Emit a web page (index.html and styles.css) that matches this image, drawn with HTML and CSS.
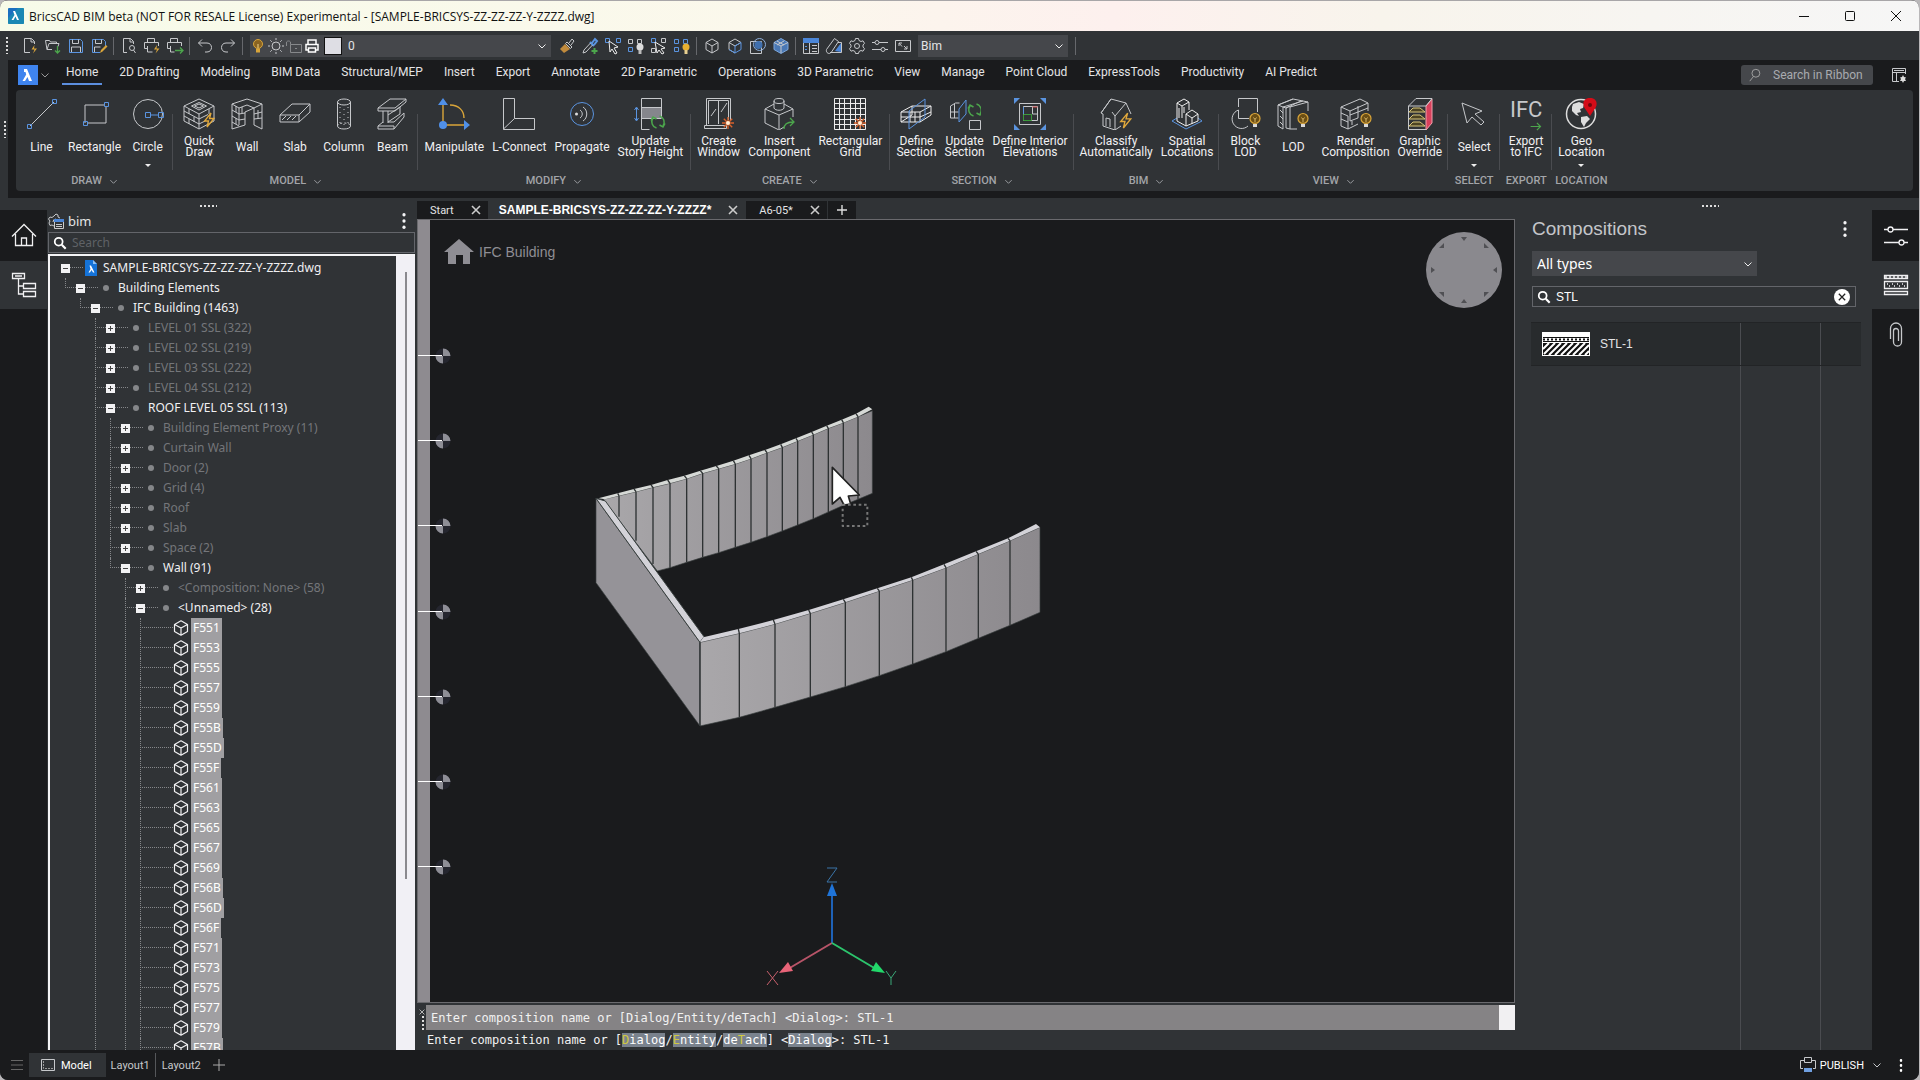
FILE: index.html
```html
<!DOCTYPE html>
<html lang="en">
<head>
<meta charset="utf-8">
<title>BricsCAD BIM</title>
<link rel="stylesheet" href="styles.css">
</head>
<body>
<svg class="defs" aria-hidden="true">
  <symbol id="chev" viewBox="0 0 10 10"><path d="M1.500 3.500l3.500 3.500 3.500-3.500" fill="none" stroke="currentColor"/></symbol>
  <symbol id="bolt" viewBox="0 0 12 16"><path d="M8 1L1.500 9h4L4 15l7-8.500H6.500z" fill="none" stroke="#e0a83c" stroke-width="1.300"/></symbol>
  <symbol id="bulb" viewBox="0 0 12 16"><circle cx="6" cy="6" r="5" fill="#6b4e14" stroke="#d9a53a" stroke-width="1.200"/><path d="M4.500 5l1.500 2 1.500-2M6 7v3" stroke="#f0cf7c" fill="none" stroke-width=".8"/><path d="M4 11.500h4v3H4z" fill="#d8d8d8"/></symbol>
  <symbol id="spark" viewBox="0 0 12 12"><path d="M6 0v12M0 6h12M1.800 1.800l8.400 8.400M10.200 1.800l-8.400 8.400" stroke="#d8622c" stroke-width="1.400"/><circle cx="6" cy="6" r="2" fill="#fff0d8"/></symbol>
  <symbol id="sync" viewBox="0 0 16 16"><path d="M6.500 14A6.500 6.500 0 0 1 3 4M1 6.500L3 3l3.500 2M9.500 2A6.500 6.500 0 0 1 13 12M15 9.500L13 13l-3.500-2" fill="none" stroke="#4ca64c" stroke-width="1.500"/></symbol>
  <symbol id="mag" viewBox="0 0 16 16"><circle cx="6.500" cy="6.500" r="4.500" fill="none" stroke="currentColor" stroke-width="2"/><path d="M10 10l4.500 4.500" stroke="currentColor" stroke-width="2.500"/></symbol>
  <symbol id="cube" viewBox="0 0 16 16"><path d="M8 .8l6.500 3.700v7L8 15.200l-6.500-3.700v-7zM1.500 4.500L8 8l6.500-3.500M8 8v7" fill="none" stroke="currentColor" stroke-width="1.200" stroke-linejoin="round"/></symbol>
  <symbol id="x" viewBox="0 0 10 10"><path d="M1 1l8 8M9 1L1 9" stroke="currentColor" stroke-width="1.600"/></symbol>
  <symbol id="dots" viewBox="0 0 4 18"><circle cx="2" cy="2" r="2" fill="currentColor"/><circle cx="2" cy="9" r="2" fill="currentColor"/><circle cx="2" cy="16" r="2" fill="currentColor"/></symbol>
</svg>

<div class="window">
  <header class="titlebar">
    <svg class="app-logo" viewBox="0 0 16 16"><rect width="16" height="16" rx="1" fill="#1b6fc0"/><path d="M0 10L10 0h6v16H0z" fill="#1aa0a8" opacity=".5"/><path d="M5 3h2l4 9H9L7.500 8.500 5.500 12H3.500l3-5z" fill="#fff"/></svg>
    <h1>BricsCAD BIM beta (NOT FOR RESALE License) Experimental - [SAMPLE-BRICSYS-ZZ-ZZ-ZZ-Y-ZZZZ.dwg]</h1>
    <div class="win-btns">
      <button aria-label="Minimize"><svg viewBox="0 0 12 12"><path d="M1 6.500h10"/></svg></button>
      <button aria-label="Maximize"><svg viewBox="0 0 12 12"><rect x="1.500" y="1.500" width="9" height="9" rx="1"/></svg></button>
      <button aria-label="Close"><svg viewBox="0 0 12 12"><path d="M1 1l10 10M11 1L1 11"/></svg></button>
    </div>
  </header>

  <div class="toolbar">
    <span class="grip-v"></span>
    <button aria-label="New"><svg viewBox="0 0 18 18"><path class="w" d="M9 15.500H3.500v-14h7l3 3V7M10 1.500V5h3.500"/><path class="y" d="M13.500 8l-3 4.500h3l-1.500 4 4-5h-3z"/></svg></button>
    <button aria-label="Open"><svg viewBox="0 0 18 18"><path class="w" d="M8 12.500H3L1.500 3.500h4l1 1.500h6v2M3 12.500l2-6h10l-1 3"/><path class="g" d="M13.500 9v7M11 13.500l2.500 2.500 2.500-2.500"/></svg></button>
    <button aria-label="Save"><svg viewBox="0 0 18 18"><path class="b" d="M2.500 2.500h11l2 2v11h-13z"/><path class="w" d="M5.500 2.500v4h6v-4M4.500 15v-5h9v5"/></svg></button>
    <button aria-label="Save as"><svg viewBox="0 0 18 18"><path class="b" d="M10 15.500H2.500v-13h11l2 2V9"/><path class="w" d="M5.500 2.500v4h6v-4M4.500 15v-5h6"/><path class="y" d="M10 16l1-3 5-5 1.500 1.500-5 5z"/></svg></button>
    <span class="sep"></span>
    <button aria-label="Print preview"><svg viewBox="0 0 18 18"><path class="w" d="M7 15.500H3.500v-14h7l3 3V7M10 1.500V5h3.500"/><circle class="w" cx="12" cy="11" r="2.500"/><path class="w" d="M13.500 13l2 3"/></svg></button>
    <button aria-label="Print"><svg viewBox="0 0 18 18"><path class="w" d="M4.500 5.500v-4h7v4M4 11.500H1.500v-6h14V9M4.500 9v6h5"/><path class="y" d="M14 8l-3 4.500h3l-1.500 4 4-5h-3z"/></svg></button>
    <button aria-label="Publish"><svg viewBox="0 0 18 18"><path class="w" d="M4.500 5.500v-4h7v4M4 11.500H1.500v-6h14V9M4.500 9v6h4"/><path class="g" d="M9 13.500h8M14 10.500l3 3-3 3"/></svg></button>
    <span class="sep"></span>
    <button aria-label="Undo"><svg viewBox="0 0 18 18"><path class="w" d="M6 2.500L2.500 6 6 9.500M2.500 6H11c6 0 6 9 0 9H9"/></svg></button>
    <button aria-label="Redo"><svg viewBox="0 0 18 18"><path class="w" d="M12 2.500L15.500 6 12 9.500M15.500 6H7C1 6 1 15 7 15h2"/></svg></button>
    <span class="sep"></span>
    <div class="combo layer">
      <svg viewBox="0 0 16 16"><circle cx="8" cy="6" r="4.500" fill="#8a6422" stroke="#d9a53a"/><path d="M6 10.500h4v4H6z" fill="#d9a53a"/><path d="M8 6v4" stroke="#f3d68a"/></svg>
      <svg viewBox="0 0 16 16"><circle cx="8" cy="8" r="4" class="w"/><path class="w" d="M8 0v2M8 14v2M0 8h2M14 8h2M2.300 2.300l1.500 1.500M12.200 12.200l1.500 1.500M13.700 2.300l-1.500 1.500M3.800 12.200l-1.500 1.500"/></svg>
      <svg viewBox="0 0 16 16" class="dim"><path class="w" d="M4.500 14.500h11v-8h-11zM4.500 6.500V4a2.500 2.500 0 0 0-4 0v4M9 10.500h2"/></svg>
      <svg viewBox="0 0 16 16"><path d="M4 6V2h8v4M4 12H2V6.500h12V12h-2M4.500 10h7v4h-7z" fill="none" stroke="#fff" stroke-width="1.500"/></svg>
      <span class="swatch"></span>
      <select aria-label="Layer"><option>0</option></select>
      <svg class="chev"><use href="#chev"/></svg>
    </div>
    <button aria-label="Match properties"><svg viewBox="0 0 18 18"><path class="w" d="M11 6l3-4 2 2-3 4M9 5l5 5-1.500 1.500-5-5z"/><path d="M7 7l5 5-6 4-4-4z" fill="#c08a3c"/></svg></button>
    <button aria-label="Pick"><svg viewBox="0 0 18 18"><path class="b" d="M9 5l4 4M11 6l3-4 2 2-3 4" stroke-width="2"/><path class="w" d="M9.500 6L3 13l-1 3 3-1 6.500-7"/><path class="g2" d="M13.500 11v6M10.500 14h6"/></svg></button>
    <button aria-label="Select similar"><svg viewBox="0 0 18 18"><path class="b" d="M1.500 1.500h4v4h-4zM12.500 1.500h4v4h-4z"/><path class="w2" d="M5 4l9 6-4 1 3 5-2 1-3-5-2 3z"/></svg></button>
    <button aria-label="Isolate"><svg viewBox="0 0 18 18"><path class="w" d="M1.500 2.500h4v4h-4zM10.500 2.500h4v4h-4z"/><path class="b" d="M1.500 10.500h4v4h-4z"/><circle cx="13" cy="10" r="3.500" fill="#ddd"/><path d="M11.500 13h3v4h-3z" fill="#bbb"/></svg></button>
    <button aria-label="Hide"><svg viewBox="0 0 18 18"><path class="b" d="M1.500 1.500h4v4h-4z"/><path class="w" d="M11.500 1.500h4v4h-4zM1.500 11.500h4v4h-4z"/><path class="w2" d="M5 5l10 6-4 1 3 4-2 1-3-4-2 3z"/></svg></button>
    <button aria-label="Show"><svg viewBox="0 0 18 18"><path class="b" d="M1.500 2.500h4v4h-4zM10.500 2.500h4v4h-4zM1.500 10.500h4v4h-4z"/><circle cx="13" cy="10" r="3.500" fill="#e8b030"/><path d="M11.500 13h3v4h-3z" fill="#e8d090"/></svg></button>
    <span class="sep"></span>
    <button aria-label="Box"><svg viewBox="0 0 18 18"><path class="w" d="M9 2l6 3.500v7L9 16l-6-3.500v-7zM3 5.500L9 9l6-3.500M9 9v7"/></svg></button>
    <button aria-label="Box edges"><svg viewBox="0 0 18 18"><path class="w" d="M3 5.500L9 2l6 3.500L9 9zM3 5.500v7L9 16"/><path class="b" d="M15 5.500v7L9 16V9l6-3.500M3 12.500L9 16"/></svg></button>
    <button aria-label="Boolean"><svg viewBox="0 0 18 18"><path class="w" d="M1.500 4.500h11v12h-11z"/><circle cx="10.500" cy="7.500" r="6" fill="none" stroke="#8fb0dc"/><circle cx="9.500" cy="8" r="4" fill="#3f6fae"/></svg></button>
    <button aria-label="Shaded box"><svg viewBox="0 0 18 18"><path d="M9 1.500l7 4v7l-7 4-7-4v-7z" fill="#4a78b4" stroke="#7ba6dc"/><path class="w" d="M2 5.500L9 9l7-3.500M9 9v7M5 4l7 4M12 4L5 8"/></svg></button>
    <span class="sep"></span>
    <button aria-label="Properties"><svg viewBox="0 0 18 18"><path class="w" d="M1.500 1.500h15v15h-15z"/><path d="M1 1h16v5H1z" fill="#4b86d8"/><path class="w" d="M7.500 6v10M10 8.500h5M10 11.500h5M10 14.500h5"/><path class="b" d="M3 9.500h2M3 12.500h2"/></svg></button>
    <button aria-label="Materials"><svg viewBox="0 0 18 18"><path class="w" d="M1.500 12.500l8-11 4 3-7 10.500c-2 3-6 1-5-2.500z"/><path d="M10 14l6-8v9z" fill="#4b86d8"/><path class="w" d="M13 5.500h3.500v10H5"/></svg></button>
    <button aria-label="Settings"><svg viewBox="0 0 18 18"><circle class="w" cx="9" cy="9" r="2.500"/><path class="w" d="M7.500 1.500h3l.5 2 2 1 2-.7 1.500 2.500-1.500 1.700v2l1.500 1.700-1.500 2.500-2-.7-2 1-.5 2h-3l-.5-2-2-1-2 .7L1.500 11.700 3 10V8L1.500 6.300 3 3.800l2 .7 2-1z"/></svg></button>
    <button aria-label="Options"><svg viewBox="0 0 18 18"><circle class="w" cx="6" cy="5.500" r="2"/><circle class="w" cx="12" cy="12.500" r="2"/><path class="w" d="M1 5.500h3M8 5.500h9M1 12.500h9M14 12.500h3"/></svg></button>
    <button aria-label="Full screen"><svg viewBox="0 0 18 18"><path class="w" d="M1.500 3.500h15v11h-15zM8 9.500L5 6M5 9V6h3M10 9l3 3M13 9v3h-3"/></svg></button>
    <div class="combo workspace">
      <select aria-label="Workspace"><option>Bim</option></select>
      <svg class="chev"><use href="#chev"/></svg>
    </div>
    <span class="sep"></span>
  </div>

  <section class="ribbon-wrap">
    <span class="grip-v side"></span>
    <div class="ribbon">
      <div class="tabs">
        <button class="logo-btn" aria-label="Application menu"><svg viewBox="0 0 20 20"><path d="M6 4h3l5 12h-3L9.500 12 7 16H4.500l3.700-6.500L7.500 7H6z" fill="#fff"/></svg></button>
        <svg class="chev"><use href="#chev"/></svg>
        <nav>
          <a href="#" class="on">Home</a><a href="#">2D Drafting</a><a href="#">Modeling</a><a href="#">BIM Data</a><a href="#">Structural/MEP</a><a href="#">Insert</a><a href="#">Export</a><a href="#">Annotate</a><a href="#">2D Parametric</a><a href="#">Operations</a><a href="#">3D Parametric</a><a href="#">View</a><a href="#">Manage</a><a href="#">Point Cloud</a><a href="#">ExpressTools</a><a href="#">Productivity</a><a href="#">AI Predict</a>
        </nav>
        <label class="rsearch"><svg viewBox="0 0 16 16"><circle cx="9" cy="6" r="4.500" fill="none" stroke="#aaa"/><path d="M6 10l-4 5" stroke="#aaa"/></svg><input placeholder="Search in Ribbon" aria-label="Search in Ribbon"></label>
        <button class="rcfg" aria-label="Ribbon settings"><svg viewBox="0 0 16 16"><path class="w" d="M8 14.500H1.500v-13h13V7M1.500 5.500h13M5.500 5.500v9M3 3.500h10"/><path d="M12 8l1 2 2 .5-1 1.500 1 2h-2l-1 2-1-2H9l1-2-1-1.500 2-.5z" fill="#ddd"/></svg></button>
      </div>
      <div class="panel">
        <div class="group draw">
          <div class="btns">
            <button><svg viewBox="0 0 32 32"><path class="w" d="M4 28L28 4"/><path class="b" d="M1.500 26.500h4v4h-4zM26.500 1.500h4v4h-4z"/></svg><span>Line</span></button>
            <button><svg viewBox="0 0 32 32"><path class="w" d="M6 25V7h19M27 9v16H8"/><path class="b" d="M4.500 23.500h4v4h-4zM25.500 4.500h4v4h-4z"/></svg><span>Rectangle</span></button>
            <button><svg viewBox="0 0 32 32"><circle class="w" cx="16" cy="16" r="14.500"/><path class="b" d="M13.500 14.500h5v5h-5zM26.500 14.500h5v5h-5zM18.500 17h8"/></svg><span>Circle</span><i class="tri"></i></button>
          </div>
          <h2>DRAW <svg class="chev"><use href="#chev"/></svg></h2>
        </div>
        <div class="group">
          <div class="btns">
            <button><svg viewBox="0 0 32 32"><path class="w" d="M16 1l15 7v15L16 31 1 23V8zM1 8l15 8 15-8M16 16v15M8.500 8L16 4.500 23.500 8 16 12zM11.500 8L16 6l4.500 2L16 10zM1 13l15 8 9-4.500M1 18l15 8 6-3M6 11v5M11 19v5M6 21v5M26 11v5"/><use href="#bolt" x="20" y="14" width="12" height="16"/></svg><span>Quick<br>Draw</span></button>
            <button><svg viewBox="0 0 32 32"><path class="w" d="M1 6l15-5 15 5v25l-8-4V10L14 14v13L1 31zM1 6l7 4 8-3 7 3 8-4M8 10v17M1 12l7 4 6-1M1 18l7 4 6-1M1 24l7 4M5 8v6M5 20v6M11 9v6M23 16l8-2M23 21l8-1M27 12v9"/></svg><span>Wall</span></button>
            <button><svg viewBox="0 0 32 32"><path class="w" d="M1 17L13 6h18v8L20 24H1zM1 17h19v7M20 17L31 6M3 22l4-4M8 22l4-4M13 22l4-4"/></svg><span>Slab</span></button>
            <button><svg viewBox="0 0 32 32"><ellipse class="w" cx="16" cy="4" rx="6.500" ry="3"/><path class="w" d="M9.500 4v24c0 4 13 4 13 0V4"/><path class="w" stroke-dasharray="1 4" d="M12 9v20M16 11v20M20 9v20"/><path class="w" stroke-dasharray="2 2" d="M9.500 28c0-4 13-4 13 0"/></svg><span>Column</span></button>
            <button><svg viewBox="0 0 32 32"><path class="w" d="M2 10L14 1h16v3L19 13H2zM2 10h17L30 1M7 13v12M12 13v12M2 28h16v3H2zM2 28l5-4M12 24h6l10-9v4L18 31M12 17l12-8v7l-12 8"/></svg><span>Beam</span></button>
          </div>
          <h2>MODEL <svg class="chev"><use href="#chev"/></svg></h2>
        </div>
        <div class="group wide">
          <div class="btns">
            <button><svg viewBox="0 0 32 32"><path d="M5 27V7M5 27h22M12 7c9 0 14 6 14 13" fill="none" stroke="#d9a53a" stroke-width="1.400"/><path d="M5 0l5 7H0zM32 27l-6 5V22z" fill="#5090e8"/><circle cx="5" cy="27" r="4" fill="#5090e8"/></svg><span>Manipulate</span></button>
            <button><svg viewBox="0 0 32 32"><path class="w" d="M.5 31.500V.5h11v20h20v11zM.5 31l11-10.500"/></svg><span>L-Connect</span></button>
            <button><svg viewBox="0 0 32 32"><circle class="b" cx="16" cy="16" r="11.500"/><circle cx="10.500" cy="16" r="1.500" fill="#ddd"/><path class="w" d="M14 12c3 2 3 6 0 8M17 9c5 3 5 11 0 14"/></svg><span>Propagate</span></button>
            <button><svg viewBox="0 0 32 32"><path d="M7 9h20v11H7z" fill="#85868c"/><path class="w" d="M7.500 31.500v-31h20V20M7.500 9.500h20M7.500 20.500h20M7.500 31.500h8"/><path class="b" d="M2.500 10v12M.5 12l2-3 2 3M.5 20l2 3 2-3"/><use href="#sync" x="16" y="16" width="16" height="16"/></svg><span>Update<br>Story Height</span></button>
          </div>
          <h2>MODIFY <svg class="chev"><use href="#chev"/></svg></h2>
        </div>
        <div class="group wide">
          <div class="btns">
            <button><svg viewBox="0 0 32 32"><path class="w" d="M3.500 27V.5h24V22M5.500 26V2.500h20V22M15.500 2.500V26M1.500 27.500h22v3h-22zM8 18l5-7M18 14l6-9"/><use href="#spark" x="19" y="19" width="12" height="12"/></svg><span>Create<br>Window</span></button>
            <button><svg viewBox="0 0 32 32"><path class="w" d="M11 6L2 11v14l14 7 5-3M21 6l9 5v8M2 11l14 6 14-6M16 17v14M11 3v7c1 3 9 3 10 0V3"/><ellipse class="w" cx="16" cy="3" rx="5" ry="2.500"/><path class="g" d="M21 31c0-5 3-7 9-7M27 20l4 4-4 4"/></svg><span>Insert<br>Component</span></button>
            <button><svg viewBox="0 0 32 32"><path d="M.5.500h31v31H.5zM5.500 0v32M10.500 0v32M16.500 0v32M21.500 0v32M26.500 0v32M0 5.500h32M0 10.500h32M0 16.500h32M0 21.500h32M0 26.500h32" fill="none" stroke="#eee"/><use href="#spark" x="20" y="19" width="12" height="12"/></svg><span>Rectangular<br>Grid</span></button>
          </div>
          <h2>CREATE <svg class="chev"><use href="#chev"/></svg></h2>
        </div>
        <div class="group">
          <div class="btns">
            <button><svg viewBox="0 0 32 32"><path class="w2" fill="none" d="M1 14l11-6h19v9L20 24H1zM1 14h19v10M20 14L31 8M1 19h19l11-5M10 14v10M15 14v10M12 8v9l-11 7"/><path class="b" d="M9 13L25 1v18L9 31z"/></svg><span>Define<br>Section</span></button>
            <button><svg viewBox="0 0 32 32"><path class="w" d="M1.500 8v12h8M1.500 8l5-3h4M1.500 14h8M5.500 6v14M20.500 22.500h11v9h-11z"/><path class="b" d="M10 11l7-9v14l-7 8z"/><use href="#sync" x="18" y="4" width="16" height="16"/></svg><span>Update<br>Section</span></button>
            <button><svg viewBox="0 0 32 32"><path class="w" d="M5.500 5.500h21v21h-21zM9.500 8.500h14v14h-14zM18.500 9v7h5"/><path d="M9.500 16.500h8v6h-8z" fill="none" stroke="#3a9a3a"/><path d="M18.500 9h5" stroke="#c44"/><path class="b" d="M9.500 9v7"/><path d="M0 0h6L0 6zM32 0h-6l6 6zM0 32h6l-6-6zM32 32h-6l6-6z" fill="#5a94e0"/></svg><span>Define Interior<br>Elevations</span></button>
          </div>
          <h2>SECTION <svg class="chev"><use href="#chev"/></svg></h2>
        </div>
        <div class="group">
          <div class="btns">
            <button><svg viewBox="0 0 32 32"><path class="w" d="M1 15L11 1l15 4 5 11M1 15l2 1v12l12 4V18L26 5M15 18l-3-4M15 32l6-4M6 28v-8l4 1v8M11 1L1 15"/><use href="#bolt" x="19" y="14" width="13" height="17"/></svg><span>Classify<br>Automatically</span></button>
            <button><svg viewBox="0 0 32 32"><path class="b" d="M6 20l-5 3 14 8 16-8-4-3"/><path class="w2" fill="none" d="M6 5l7-4 5 3v8M6 5l5 3 7-4M6 5v18l9 5V16l6-4 6 4v7l-12 5M11 8v12M8 10v10M15 16l6 4 6-4M21 20v6M13 9v6"/></svg><span>Spatial<br>Locations</span></button>
          </div>
          <h2>BIM <svg class="chev"><use href="#chev"/></svg></h2>
        </div>
        <div class="group">
          <div class="btns">
            <button><svg viewBox="0 0 32 32"><path class="w" d="M9.500 9V.5h19V14M9.500 12A9.500 9.500 0 1 0 19 28M9.500 12v8.500H20"/><use href="#bulb" x="20" y="14" width="12" height="17"/></svg><span>Block<br>LOD</span></button>
            <button><svg viewBox="0 0 32 32"><path class="w" d="M1 7l15-6 15 3v9M1 7v21l5 3V9L1 7l15-6M6 9l20-6M9 10v20l4 1V8l-4 2M13 9l18-5M20 31h-7M3 12l3 3M3 18l3 3M3 24l3 3M6 9l3 1 15-7"/><use href="#bulb" x="20" y="14" width="12" height="17"/></svg><span>LOD</span></button>
            <button><svg viewBox="0 0 32 32"><path class="w" d="M1 9L20 1l8 4v8M1 9l9 4 18-8M1 9v19l7 3 10-5M10 13v10l8-3v-6l-8 3M1 15l7 3M8 18v13M1 21l7 3M18 8v6l10-4M12 23v4"/><use href="#bulb" x="20" y="14" width="12" height="17"/></svg><span>Render<br>Composition</span></button>
            <button><svg viewBox="0 0 32 32"><path d="M22 8l6-7v24l-6 7z" fill="#d8405c" stroke="#f2a0ac"/><path class="w" d="M4.500 8L12 .500h16L22 8zM4.500 8v23.500H22"/><path d="M5 14h16l-5-4H9zM5 21h16l-5-4H9zM5 28h16l-5-4H9z" fill="#4d4423" stroke="#d9c77a"/></svg><span>Graphic<br>Override</span></button>
          </div>
          <h2>VIEW <svg class="chev"><use href="#chev"/></svg></h2>
        </div>
        <div class="group">
          <div class="btns">
            <button><svg viewBox="0 0 32 32"><path class="w" d="M4 5l5 20 5-6 9 8 3-3-9-8 7-3z"/></svg><span>Select</span><i class="tri"></i></button>
          </div>
          <h2>SELECT</h2>
        </div>
        <div class="group">
          <div class="btns">
            <button><strong class="ifc">IFC<svg viewBox="0 0 12 10"><path class="g" d="M0 5h11M7 1l4 4-4 4"/></svg></strong><span>Export<br>to IFC</span></button>
          </div>
          <h2>EXPORT</h2>
        </div>
        <div class="group">
          <div class="btns">
            <button><svg viewBox="0 0 32 32"><circle cx="16" cy="16" r="14.500" fill="none" stroke="#ddd" stroke-width="1.500"/><path d="M8 6l6-2 5 2-1 4-3 1 1 3-4 1 2 3-3-1-4-4 0-4zM16 19l6-1 3 3-4 4-2 4-3-5z" fill="#ddd"/><path d="M25 0c8 0 8 8 4 12l-4 6-4-6c-4-4-4-12 4-12z" fill="#d40c18"/><circle cx="25" cy="7" r="2" fill="#70060c"/></svg><span>Geo<br>Location</span><i class="tri"></i></button>
          </div>
          <h2>LOCATION</h2>
        </div>
      </div>
    </div>
  </section>

  <main>
    <aside class="left">
      <span class="grip-h"></span>
      <div class="dock">
        <nav class="rail">
          <button aria-label="Home"><svg viewBox="0 0 26 26"><path class="r" d="M1 13.500L13 1.500l12 12M4.500 11v11.500h17V11M10.500 22v-7h5v7"/></svg></button>
          <button class="on" aria-label="Structure"><svg viewBox="0 0 26 26"><path class="r" d="M1.500 1.500h12v5h-12zM12.500 11.500h12v5h-12zM12.500 19.500h12v5h-12zM7.500 7v15h5M7.500 14h5M4 4h7"/></svg></button>
        </nav>
        <div class="structure">
          <div class="phead">
            <svg viewBox="0 0 16 16"><path class="w" d="M6 13l-2-1-2 .5L1 10l1-2-1.500-2L2 4l2 .500L6 3l2-2 2 1v2l2 1M5 9a3 3 0 0 1 3-3"/><path d="M6.500 6.500h9v9h-9z" fill="#303336" stroke="#ccc"/><path d="M6 6h10v3H6z" fill="#4b86d8"/><path class="w" d="M8 11.500h6M8 13.500h6"/></svg>
            <h2>bim</h2>
            <button aria-label="Menu"><svg viewBox="0 0 4 18"><use href="#dots"/></svg></button>
          </div>
          <label class="psearch"><svg><use href="#mag"/></svg><input placeholder="Search" aria-label="Search"></label>
          <div class="treebox">
            <ul class="tree">
              <li><div class="row"><button class="tg m"></button><svg class="file" viewBox="0 0 12 16"><path d="M0 0h8l4 4v12H0z" fill="#1573d8"/><path d="M8 0v4h4z" fill="#8ec0f4"/><path d="M4.500 5.500h1.500l3.500 7H8L6.500 10l-1.500 2.500H3.500L5.500 9z" fill="#fff"/></svg><span>SAMPLE-BRICSYS-ZZ-ZZ-ZZ-Y-ZZZZ.dwg</span></div>
                <ul>
                  <li><div class="row"><button class="tg m"></button><i></i><span>Building Elements</span></div>
                    <ul>
                      <li><div class="row"><button class="tg m"></button><i></i><span>IFC Building (1463)</span></div>
                        <ul class="more">
                          <li><div class="row off"><button class="tg"></button><i></i><span>LEVEL 01 SSL (322)</span></div></li>
                          <li><div class="row off"><button class="tg"></button><i></i><span>LEVEL 02 SSL (219)</span></div></li>
                          <li><div class="row off"><button class="tg"></button><i></i><span>LEVEL 03 SSL (222)</span></div></li>
                          <li><div class="row off"><button class="tg"></button><i></i><span>LEVEL 04 SSL (212)</span></div></li>
                          <li><div class="row"><button class="tg m"></button><i></i><span>ROOF LEVEL 05 SSL (113)</span></div>
                            <ul>
                              <li><div class="row off"><button class="tg"></button><i></i><span>Building Element Proxy (11)</span></div></li>
                              <li><div class="row off"><button class="tg"></button><i></i><span>Curtain Wall</span></div></li>
                              <li><div class="row off"><button class="tg"></button><i></i><span>Door (2)</span></div></li>
                              <li><div class="row off"><button class="tg"></button><i></i><span>Grid (4)</span></div></li>
                              <li><div class="row off"><button class="tg"></button><i></i><span>Roof</span></div></li>
                              <li><div class="row off"><button class="tg"></button><i></i><span>Slab</span></div></li>
                              <li><div class="row off"><button class="tg"></button><i></i><span>Space (2)</span></div></li>
                              <li><div class="row"><button class="tg m"></button><i></i><span>Wall (91)</span></div>
                                <ul class="more">
                                  <li><div class="row off"><button class="tg"></button><i></i><span>&lt;Composition: None&gt; (58)</span></div></li>
                                  <li><div class="row"><button class="tg m"></button><i></i><span>&lt;Unnamed&gt; (28)</span></div>
                                    <ul class="more">
                                      <li><div class="row leaf"><svg><use href="#cube"/></svg><span>F551</span></div></li>
                                      <li><div class="row leaf"><svg><use href="#cube"/></svg><span>F553</span></div></li>
                                      <li><div class="row leaf"><svg><use href="#cube"/></svg><span>F555</span></div></li>
                                      <li><div class="row leaf"><svg><use href="#cube"/></svg><span>F557</span></div></li>
                                      <li><div class="row leaf"><svg><use href="#cube"/></svg><span>F559</span></div></li>
                                      <li><div class="row leaf"><svg><use href="#cube"/></svg><span>F55B</span></div></li>
                                      <li><div class="row leaf"><svg><use href="#cube"/></svg><span>F55D</span></div></li>
                                      <li><div class="row leaf"><svg><use href="#cube"/></svg><span>F55F</span></div></li>
                                      <li><div class="row leaf"><svg><use href="#cube"/></svg><span>F561</span></div></li>
                                      <li><div class="row leaf"><svg><use href="#cube"/></svg><span>F563</span></div></li>
                                      <li><div class="row leaf"><svg><use href="#cube"/></svg><span>F565</span></div></li>
                                      <li><div class="row leaf"><svg><use href="#cube"/></svg><span>F567</span></div></li>
                                      <li><div class="row leaf"><svg><use href="#cube"/></svg><span>F569</span></div></li>
                                      <li><div class="row leaf"><svg><use href="#cube"/></svg><span>F56B</span></div></li>
                                      <li><div class="row leaf"><svg><use href="#cube"/></svg><span>F56D</span></div></li>
                                      <li><div class="row leaf"><svg><use href="#cube"/></svg><span>F56F</span></div></li>
                                      <li><div class="row leaf"><svg><use href="#cube"/></svg><span>F571</span></div></li>
                                      <li><div class="row leaf"><svg><use href="#cube"/></svg><span>F573</span></div></li>
                                      <li><div class="row leaf"><svg><use href="#cube"/></svg><span>F575</span></div></li>
                                      <li><div class="row leaf"><svg><use href="#cube"/></svg><span>F577</span></div></li>
                                      <li><div class="row leaf"><svg><use href="#cube"/></svg><span>F579</span></div></li>
                                      <li><div class="row leaf"><svg><use href="#cube"/></svg><span>F57B</span></div></li>
                                    </ul>
                                  </li>
                                </ul>
                              </li>
                            </ul>
                          </li>
                        </ul>
                      </li>
                    </ul>
                  </li>
                </ul>
              </li>
            </ul>
            <div class="scroll"><span></span></div>
          </div>
        </div>
      </div>
    </aside>

    <section class="doc">
      <div class="dtabs">
        <div class="dtab">Start<button aria-label="Close Start"><svg><use href="#x"/></svg></button></div>
        <div class="dtab on">SAMPLE-BRICSYS-ZZ-ZZ-ZZ-Y-ZZZZ*<button aria-label="Close drawing"><svg><use href="#x"/></svg></button></div>
        <div class="dtab">A6-05*<button aria-label="Close A6-05"><svg><use href="#x"/></svg></button></div>
        <button class="dadd" aria-label="New tab"><svg viewBox="0 0 10 10"><path d="M5 0v10M0 5h10" stroke="#ddd" stroke-width="1.400"/></svg></button>
      </div>
      <div class="view">
        <div class="strip"></div>
        <div class="crumb"><svg viewBox="0 0 30 26"><path d="M15 0l15 13h-4v12h-7v-9h-7v9H4V13H0z" fill="#8f8e94"/></svg>IFC Building</div>
        <svg class="scene">
          <defs><g id="lvl"><circle cx="25" cy="0" r="7.500" fill="#25262f"/><path d="M25 0v-7.500a7.500 7.500 0 0 1 7.500 7.500zM25 0v7.500a7.500 7.500 0 0 1-7.500-7.500z" fill="#8e8e96"/><path d="M0-.5h24" stroke="#fff"/></g>
          <linearGradient id="front"><stop offset="0" stop-color="#a9a7aa"/><stop offset="1" stop-color="#8c898d"/></linearGradient></defs>
          <use href="#lvl" y="136"/><use href="#lvl" y="221"/><use href="#lvl" y="306"/><use href="#lvl" y="392"/><use href="#lvl" y="477"/><use href="#lvl" y="562"/><use href="#lvl" y="647"/>
          <g transform="translate(162 170) scale(.33333)" stroke-linejoin="round">
            <path fill="url(#front)" stroke="#39403f" stroke-width="2" d="M70 328L117 317 168 305 219 292 270 280 320 266 368 250 416 236 466 222 513 206 561 188 607 172 653 153 700 134 745 115 790 98 834 80 877 62V310L834 328 790 346 745 366 700 386 653 405 607 423 561 440 513 457 466 472 416 488 368 502 320 517 270 533 232 543z"/>
            <path fill="#d6d9d6" d="M55 325L113 310 162 297 213 285 263 270 313 257 361 242 409 228 460 212 507 196 555 180 602 163 648 145 695 126 740 107 785 89 828 71 866 50 877 58 834 80 790 98 745 115 700 134 653 153 607 172 561 188 513 206 466 222 416 236 368 250 320 266 270 280 219 292 168 305 117 317 75 328z"/>
            <path stroke="#2e3233" stroke-width="4" d="M117 317V380M168 305V452M219 292V522M270 280V533M320 266V517M368 250V502M416 236V488M466 222V472M513 206V457M561 188V440M607 172V423M653 153V405M700 134V386M745 115V366M790 98V346M834 80V328M113 310l4 7M162 297l6 8M213 285l6 7M263 270l7 10M313 257l7 9M361 242l7 8M409 228l7 8M460 212l6 10M507 196l6 10M555 180l6 8M602 163l5 9M648 145l5 8M695 126l5 8M740 107l5 8M785 89l5 9M828 71l6 9"/>
            <path fill="#959398" stroke="#39403f" stroke-width="2" d="M48 325L360 757V1008L48 578z"/>
            <path fill="#d3d2d8" stroke="#39403f" stroke-width="3" d="M48 325L76 333 372 740 360 757z"/>
            <path fill="url(#front)" stroke="#39403f" stroke-width="2" d="M360 757L478 730 585 702 691 670 796 637 898 603 998 570 1098 533 1195 492 1290 452 1380 412V667L1290 706 1195 745 1098 785 998 822 898 857 796 890 691 921 585 952 478 982 360 1008z"/>
            <path fill="#d3d2d8" d="M360 757L370 742 475 717 580 690 686 660 790 628 892 595 994 562 1092 523 1188 484 1284 445 1368 402 1380 412 1290 452 1195 492 1098 533 998 570 898 603 796 637 691 670 585 702 478 730z"/>
            <path stroke="#2e3233" stroke-width="4" d="M360 757V1008M478 730V982M585 702V952M691 670V921M796 637V890M898 603V857M998 570V822M1098 533V785M1195 492V745M1290 452V706M475 717l3 13M580 690l5 12M686 660l5 10M790 628l6 9M892 595l6 8M994 562l4 8M1092 523l6 10M1188 484l7 8M1284 445l6 7"/>
            <path d="M757 232V342L780 322 792 345 812 342 805 318 838 315z" fill="#fff" stroke="#222" stroke-width="5"/>
            <path d="M788 344h74v64h-74z" fill="#1a1b1d" stroke="#777" stroke-width="6" stroke-dasharray="8 8"/>
          </g>
          <g>
            <path d="M414 723V672" stroke="#1e62b8" stroke-width="2"/><path d="M414 663l5 13h-10z" fill="#1f74d8"/>
            <path d="M414 723l-44 26" stroke="#b85468" stroke-width="2"/><path d="M361 753l14-2-5-9z" fill="#e86478"/>
            <path d="M414 723l44 26" stroke="#2cc46c" stroke-width="2"/><path d="M467 753l-9-11-5 9z" fill="#22d86a"/>
            <path d="M409 648h10l-10 14h10" stroke="#3a74a8" fill="none"/>
            <path d="M349 751l11 14M360 751l-11 14" stroke="#c8606c" fill="none"/>
            <path d="M468 751l5 7 5-7M473 758v7" stroke="#3aa878" fill="none"/>
          </g>
        </svg>
        <svg class="disc" viewBox="0 0 78 78"><circle cx="39" cy="39" r="38" fill="#8a898e"/><path fill="#505054" d="M36 6h6l-3 4zM36 72h6l-3-4zM6 36v6l4-3zM72 36v6l-4-3zM14 17h5v-5zM64 17h-5v-5zM14 61h5v5zM64 61h-5v5z"/></svg>
      </div>
      <div class="cmd">
        <div class="chandle"><svg><use href="#x"/></svg><span></span></div>
        <div class="cbody">
          <div class="chist"><p>Enter composition name or [Dialog/Entity/deTach] &lt;Dialog&gt;: STL-1</p><span></span></div>
          <p class="cline">Enter composition name or [<mark><b>D</b>ialog</mark>/<mark><b>E</b>ntity</mark>/<mark>de<b>T</b>ach</mark>] &lt;<mark>Dialog</mark>&gt;: STL-1</p>
        </div>
      </div>
    </section>

    <aside class="right">
      <span class="grip-h"></span>
      <div class="dock">
        <div class="comps">
          <div class="chead"><h2>Compositions</h2><button aria-label="Menu"><svg viewBox="0 0 4 18"><use href="#dots"/></svg></button></div>
          <div class="combo types"><select aria-label="Type"><option>All types</option></select><svg class="chev"><use href="#chev"/></svg></div>
          <label class="csearch"><svg><use href="#mag"/></svg><input value="STL" aria-label="Search compositions"><button aria-label="Clear"><svg><use href="#x"/></svg></button></label>
          <div class="clist">
            <div class="citem">
              <div class="cname"><svg viewBox="0 0 48 24"><rect width="48" height="24" fill="#fff"/><path d="M1 5.500h46M1 9.500h46" stroke="#111"/><path d="M1 7.500h46" stroke="#111" stroke-dasharray="2 2" stroke-width="2"/><path d="M1 11h46v12H1z" fill="#111"/><path d="M2 22L13 11M7 23l12-12M13 23l12-12M19 23l12-12M25 23l12-12M31 23l12-12M37 23l10-10M43 23l4-4M1 17l6-6" stroke="#fff" stroke-width="2"/></svg><span>STL-1</span></div>
              <div></div><div></div>
            </div>
            <div class="citem rest"><div></div><div></div><div></div></div>
          </div>
        </div>
        <nav class="rail">
          <button aria-label="Properties"><svg viewBox="0 0 26 26"><circle class="r" cx="7.500" cy="6.500" r="2.500"/><circle class="r" cx="18.500" cy="19.500" r="2.500"/><path class="r" d="M1 6.500h4M10 6.500h15M1 19.500h15M21 19.500h4"/></svg></button>
          <button class="on" aria-label="Compositions"><svg viewBox="0 0 26 26"><path class="r" d="M1.500 3.500h23v3h-23zM1.500 9.500h23v7h-23zM1.500 19.500h23v3h-23z"/><path class="r" stroke-dasharray="2 2" d="M2 5h22"/><path class="r" stroke-dasharray="1 4" d="M4 12h19M6 14h16"/></svg></button>
          <button aria-label="Attachments"><svg viewBox="0 0 26 26"><path class="w" stroke-width="1.300" d="M7.500 17V6.500a5.500 5.500 0 0 1 11 0V20a4 4 0 0 1-8 0V9a2.500 2.500 0 0 1 5 0v10"/></svg></button>
        </nav>
      </div>
    </aside>
  </main>

  <footer>
    <button class="ham" aria-label="Menu"><svg viewBox="0 0 12 12"><path d="M0 1.500h12M0 6h12M0 10.500h12" stroke="#666"/></svg></button>
    <button class="lt on"><svg viewBox="0 0 14 12"><path class="w" d="M.5.500h13v11H.5z"/><path d="M2.500 2v7.500H12" stroke="#999" stroke-dasharray="2 1" fill="none"/></svg>Model</button>
    <button class="lt">Layout1</button>
    <button class="lt line">Layout2</button>
    <button class="plus" aria-label="Add layout"><svg viewBox="0 0 12 12"><path d="M6 0v12M0 6h12" stroke="#aaa"/></svg></button>
    <div class="pub">
      <button class="pbtn"><svg viewBox="0 0 16 16"><path class="w" d="M4.500 5.500v-5h7v5zM3 11.500H.5v-8H4M12 3.500h3.500v8H13"/><path d="M4 11h8v4H4z" fill="#6f9fe0"/></svg>PUBLISH</button>
      <svg class="chev"><use href="#chev"/></svg>
      <button class="fdots" aria-label="More"><svg viewBox="0 0 4 18"><use href="#dots"/></svg></button>
    </div>
  </footer>
</div>
</body>
</html>
```
FILE: styles.css
```css
* { box-sizing: border-box; }
html, body { height: 100%; }
body { margin: 0; background: #b9b7b9; font-family: Roboto, "Noto Sans", sans-serif; font-size: 12px; color: #e4e4e6; overflow: hidden; }
button, input, select { font: inherit; color: inherit; border: 0; padding: 0; margin: 0; background: none; border-radius: 0; outline: 0; }
h1, h2, p, ul { margin: 0; padding: 0; font: inherit; }
ul { list-style: none; }
svg { display: block; flex: none; }
a { color: inherit; text-decoration: none; }
select { appearance: none; }
.defs { position: absolute; width: 0; height: 0; }
.w, .w2, .b, .g, .r { fill: none; stroke: #c6c8cb; }
.w2 { fill: #303336; stroke: #eee; }
.b { stroke: #5a94e0; }
.g { stroke: #4ca64c; stroke-width: 1.3; }
.g2 { fill: none; stroke: #4ca64c; stroke-width: 2; }
.r { stroke: #f0f0f2; stroke-width: 1.3; }
.y { fill: #d9a53a; }
.chev { width: 10px; height: 10px; }

.window { height: 100vh; margin-right: 1px; display: flex; flex-direction: column; background: #303336; border-radius: 8px; overflow: hidden; }

.titlebar { height: 31px; flex: none; display: flex; align-items: center; padding-left: 8px; border-top: 1px solid #a8a6a8; background: linear-gradient(90deg, #f7fbe9, #fbf8ec 40%, #fdf0ee 58%, #f8f4ec 72%, #f6f6f6); color: #111; font-family: "Open Sans", sans-serif; }
.app-logo { width: 16px; height: 16px; margin-right: 5px; }
.win-btns { margin-left: auto; display: flex; }
.win-btns button { width: 46px; height: 30px; display: grid; place-items: center; }
.win-btns svg { width: 12px; height: 12px; fill: none; stroke: #111; }

.toolbar { height: 29px; flex: none; display: flex; align-items: center; padding-left: 6px; }
.toolbar > button { width: 23px; height: 23px; display: grid; place-items: center; }
.toolbar > button svg { width: 18px; height: 18px; }
.grip-v { width: 2px; height: 17px; flex: none; background: repeating-linear-gradient(#ddd 0 2px, transparent 2px 4px); margin-right: 10px; }
.sep { width: 1px; height: 18px; margin: 0 3px; background: #66686c; flex: none; }
.combo { display: flex; align-items: center; background: #45474b; position: relative; }
.combo select { flex: 1; height: 100%; }
.combo .chev { margin-right: 4px; color: #eee; }
.layer { width: 301px; height: 22px; margin: 0 4px; gap: 2px; }
.layer svg { width: 16px; height: 16px; }
.layer svg.chev { width: 10px; height: 10px; }
.layer .dim { opacity: .5; }
.swatch { width: 18px; height: 18px; background: #dedee4; border: 1px solid #111; margin: 0 4px 0 2px; }
.workspace { width: 150px; height: 22px; margin: 0 4px; padding-left: 3px; }

.ribbon-wrap { height: 138px; flex: none; display: flex; align-items: center; }
.grip-v.side { margin: 0 2px 0 4px; }
.ribbon { flex: 1; height: 100%; background: #1a1b1d; padding: 0 6px 0 8px; }
.tabs { height: 30px; display: flex; align-items: center; padding-left: 2px; }
.logo-btn { width: 20px; height: 20px; background: #3f84ee; }
.tabs > .chev { margin: 0 12px 0 2px; color: #999; }
.tabs nav { display: flex; gap: 21px; height: 23px; }
.tabs nav a { line-height: 17px; height: 21px; white-space: nowrap; }
.tabs nav .on { padding: 0 4px; margin-right: -4px; border-bottom: 2px solid #5c8ede; }
.rsearch { margin-left: auto; width: 132px; height: 20px; background: #45474b; border-radius: 3px; display: flex; align-items: center; padding-left: 7px; }
.rsearch svg { width: 14px; height: 14px; margin-right: 11px; }
.rsearch input { width: 96px; }
.rsearch input::placeholder { color: #a9abb0; }
.rcfg { margin: 0 6px 0 18px; }
.rcfg svg { width: 16px; height: 16px; }
.panel { height: 101px; background: #303336; border-radius: 4px; display: flex; }
.group { display: flex; flex-direction: column; justify-content: space-between; padding: 0 2px; position: relative; }
.group.wide { padding-right: 4px; }
.group::after { content: ""; position: absolute; right: 0; top: 24px; height: 56px; width: 1px; background: #4a4c50; }
.group:last-child::after { display: none; }
.btns { display: flex; height: 80px; }
.btns button { min-width: 48px; padding: 8px 4px 0; display: grid; grid-template-rows: 32px 34px 6px; justify-items: center; align-content: start; line-height: 11px; color: #f0f0f2; }
.draw .btns button { min-width: 47px; padding: 8px 3px 0; }
.btns button > svg { width: 32px; height: 32px; }
.btns button > span { align-self: center; text-align: center; white-space: nowrap; }
.tri { width: 0; height: 0; border: 3px solid transparent; border-top-color: #eee; border-bottom: 0; }
.ifc { font-weight: 400; font-size: 22px; line-height: 24px; color: #c6c8cb; display: grid; justify-items: end; }
.ifc svg { width: 12px; height: 9px; }
.group h2 { height: 22px; line-height: 22px; font-size: 11px; font-weight: 500; color: #a3a5a9; display: flex; justify-content: center; align-items: center; gap: 7px; }
.group h2 .chev { width: 9px; height: 9px; }

main { flex: 1; min-height: 0; display: flex; }
.left { width: 417px; }
.right { width: 404px; }
.left, .right { flex: none; display: flex; flex-direction: column; min-height: 0; }
.grip-h { flex: none; width: 17px; height: 2px; margin: 7px 200px 3px auto; background: repeating-linear-gradient(90deg, #ddd 0 2px, transparent 2px 4px); }
.dock { flex: 1; min-height: 0; display: flex; }
.rail { width: 47px; flex: none; background: #1a1b1d; }
.rail button { display: grid; place-items: center; width: 100%; height: 51px; }
.rail .on { background: #303336; height: 48px; }
.rail svg { width: 26px; height: 26px; }

.structure { flex: 1; display: flex; flex-direction: column; min-height: 0; padding: 0 2px 0 1px; font-family: "Noto Sans", sans-serif; }
.phead { height: 22px; flex: none; display: flex; align-items: center; }
.phead h2 { font-size: 13px; margin-left: 4px; }
.phead > svg { width: 16px; height: 16px; }
.phead button { margin: 0 9px 0 auto; }
.phead button svg, .chead svg { width: 4px; height: 16px; color: #f4f4f6; }
.psearch, .csearch { display: flex; align-items: center; border: 1px solid #63656a; height: 21px; flex: none; color: #fff; }
.psearch { margin-bottom: 1px; }
.psearch > svg, .csearch > svg { width: 14px; height: 14px; margin: 0 5px 0 4px; }
.psearch input, .csearch input { flex: 1; min-width: 0; }
.psearch input::placeholder { color: #5f6266; }
.treebox { flex: 1; min-height: 0; display: flex; border: solid #f4f4f6; border-width: 2px 0 0 2px; overflow: hidden; }
.tree { flex: 1; overflow: hidden; padding-top: 2px; }
.tree ul { margin-left: 15px; }
.tree li { position: relative; }
.tree ul > li::before { content: ""; position: absolute; left: 0; top: 0; bottom: 0; border-left: 1px dotted #85878a; }
.tree ul:not(.more) > li:last-child::before { bottom: auto; height: 10px; }
.row { position: relative; display: flex; align-items: center; height: 20px; padding-left: 11px; line-height: 20px; white-space: nowrap; color: #f0f0f2; }
.row::before { content: ""; position: absolute; left: 0; top: 9px; width: 33px; border-top: 1px dotted #85878a; }
.tree > li > .row::before { left: 15px; width: 18px; }
.tg { position: relative; width: 9px; height: 9px; margin-right: 18px; background: linear-gradient(#444, #444) 50% 50% / 5px 1px no-repeat, linear-gradient(#444, #444) 50% 50% / 1px 5px no-repeat, #f2f2f4; flex: none; }
.tg.m { background: linear-gradient(#444, #444) 50% 50% / 5px 1px no-repeat, #f2f2f4; }
.row i { width: 6px; height: 6px; border-radius: 3px; background: #85878a; margin-right: 9px; }
.off { color: #74767a; }
.file { width: 12px; height: 16px; margin: 0 6px 0 -3px; }
.leaf { padding-left: 33px; }
.leaf svg { width: 16px; height: 16px; margin-right: 2px; }
.leaf span { background: #a09fa2; padding: 0 2px; color: #fff; }
.scroll { width: 19px; flex: none; background: #f1f0f5; padding-top: 16px; }
.scroll span { display: block; width: 2px; height: 78%; margin: 0 auto; background: #8a898e; }

.doc { flex: 1; min-width: 0; display: flex; flex-direction: column; }
.dtabs { height: 21px; flex: none; display: flex; padding-top: 3px; }
.dtab { display: flex; align-items: center; background: #1a1b1d; padding: 0 7px 0 13px; font-size: 11px; color: #e4e4e6; }
.dtab.on { background: #303336; font: bold 12px "Liberation Sans", sans-serif; color: #fff; padding: 0 8px 0 11px; }
.dtab button { margin-left: 17px; }
.dtab svg { width: 10px; height: 10px; color: #ccc; }
.dadd { width: 28px; background: #1a1b1d; display: grid; place-items: center; margin-left: 1px; }
.dadd svg { width: 10px; height: 10px; }
.view { flex: 1; min-height: 0; position: relative; display: flex; border: 1px solid #6a6a6e; background: #1a1b1d; }
.strip { width: 12px; background: #8e8b90; }
.crumb { display: flex; align-items: center; gap: 5px; height: 32px; margin: 16px 0 0 14px; font: 14px "Liberation Sans", sans-serif; color: #8f8e94; }
.crumb svg { width: 30px; height: 26px; }
.scene { position: absolute; left: 0; top: 0; width: 100%; height: 100%; }
.disc { position: absolute; right: 11px; top: 11px; width: 78px; height: 78px; }
.cmd { flex: none; display: flex; padding-top: 2px; font: 12px/20px "DejaVu Sans Mono", monospace; color: #f2f2f2; }
.chandle { width: 9px; padding: 4px 0 0 2px; }
.chandle svg { width: 6px; height: 6px; color: #bbb; }
.chandle span { display: block; width: 2px; height: 16px; margin: 1px 0 0 3px; background: repeating-linear-gradient(#ddd 0 2px, transparent 2px 4px); }
.cbody { flex: 1; min-width: 0; white-space: nowrap; }
.chist { height: 25px; display: flex; background: #858385; }
.chist p { flex: 1; padding: 3px 0 0 5px; }
.chist span { width: 16px; background: #f1f0f2; }
.cline { padding-left: 1px; }
.cline mark { background: #7a828d; color: #fff; }
.cline b { font-weight: 400; color: #d0c840; }

.comps { flex: 1; min-width: 0; display: flex; flex-direction: column; padding-left: 16px; }
.chead { display: flex; align-items: center; justify-content: space-between; height: 38px; padding: 0 25px 0 1px; }
.chead h2 { font: 19px "Liberation Sans", sans-serif; color: #c4c6ca; }
.types { width: 225px; height: 25px; margin: 3px 0 10px 1px; padding-left: 5px; font: 14px "Noto Sans", sans-serif; color: #fff; }
.csearch { margin: 0 16px 0 1px; font: 12px "Liberation Sans", sans-serif; }
.csearch button { width: 16px; height: 16px; border-radius: 8px; background: #fff; color: #222; display: grid; place-items: center; margin-right: 5px; }
.csearch button svg { width: 8px; height: 8px; }
.clist { flex: 1; display: flex; flex-direction: column; margin: 15px 11px 0 0; font: 12px "Liberation Sans", sans-serif; }
.citem { display: grid; grid-template-columns: 1fr 80px 41px; height: 44px; background: #282b2d; border: solid #222426; border-width: 1px 0; }
.citem > div + div { border-left: 1px solid #4a4c50; }
.cname { display: flex; align-items: center; gap: 10px; padding-left: 11px; }
.cname svg { width: 48px; height: 24px; }
.rest { flex: 1; background: none; border: 0; }

footer { height: 30px; flex: none; display: flex; align-items: center; background: #1a1b1d; color: #c6c8cb; font-size: 11px; }
footer button { display: flex; align-items: center; }
.ham { margin: 0 6px 0 11px; }
.ham svg, .plus svg { width: 12px; height: 12px; }
.lt { height: 24px; padding: 0 5px; }
.lt.on { background: #303336; color: #fff; padding: 0 14px 0 12px; gap: 6px; }
.lt.on svg { width: 14px; height: 12px; }
.lt.line { border-left: 1px solid #55575a; padding-left: 6px; }
.plus { margin-left: 7px; }
.pub { margin-left: auto; display: flex; align-items: center; gap: 8px; padding-right: 16px; }
.pbtn { gap: 4px; color: #fff; }
.pbtn svg { width: 16px; height: 16px; }
.fdots { margin-left: 9px; color: #fff; }
.fdots svg { width: 4px; height: 13px; }
```
